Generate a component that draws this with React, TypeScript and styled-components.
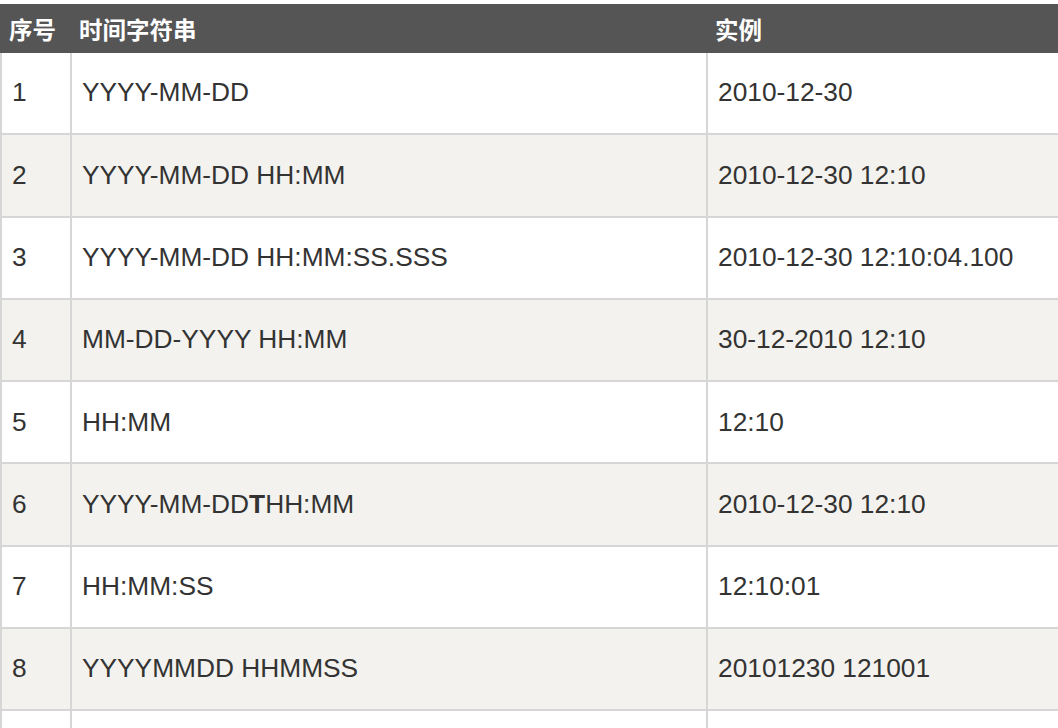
import React from "react";
import styled, { createGlobalStyle } from "styled-components";

const Global = createGlobalStyle`
  html, body {
    margin: 0;
    padding: 0;
    background: #ffffff;
    overflow: hidden;
  }
`;

const Page = styled.div`
  padding-top: 4px;
  width: 1058px;
  height: 728px;
  overflow: hidden;
`;

const Table = styled.table`
  width: 1090px;
  border-collapse: separate;
  border-spacing: 0;
  table-layout: fixed;
  font-family: "Liberation Sans", Arial, "Noto Sans CJK SC", sans-serif;
  color: #333333;
`;

const HeadCell = styled.th<{ $w?: number }>`
  ${(p) => (p.$w ? `width: ${p.$w}px;` : "")}
  background: #555555;
  color: #ffffff;
  height: 49px;
  box-sizing: border-box;
  padding: 2px 0 0 9px;
  text-align: left;
  vertical-align: middle;
  font-family: "Noto Sans CJK SC", "Liberation Sans", sans-serif;
  font-size: 23.5px;
  font-weight: 700;
  line-height: 1;
  border-left: 0;
`;

const Row = styled.tr<{ $alt: boolean }>`
  background: ${(p) => (p.$alt ? "#f3f2ee" : "#ffffff")};
`;

const Cell = styled.td`
  height: 82.3px;
  box-sizing: border-box;
  padding: 0 0 0 10px;
  border-left: 2px solid #d6d6d6;
  border-bottom: 2px solid #d6d6d6;
  vertical-align: middle;
  font-size: 26.3px;
  line-height: 1.2;
  white-space: nowrap;
  overflow: hidden;
`;

const rows: [string, React.ReactNode, string][] = [
  ["1", "YYYY-MM-DD", "2010-12-30"],
  ["2", "YYYY-MM-DD HH:MM", "2010-12-30 12:10"],
  ["3", "YYYY-MM-DD HH:MM:SS.SSS", "2010-12-30 12:10:04.100"],
  ["4", "MM-DD-YYYY HH:MM", "30-12-2010 12:10"],
  ["5", "HH:MM", "12:10"],
  [
    "6",
    <>
      YYYY-MM-DD<b>T</b>HH:MM
    </>,
    "2010-12-30 12:10",
  ],
  ["7", "HH:MM:SS", "12:10:01"],
  ["8", "YYYYMMDD HHMMSS", "20101230 121001"],
  ["", "", ""],
];

export default function App() {
  return (
    <>
      <Global />
      <Page>
        <Table>
          <thead>
            <tr>
              <HeadCell $w={70}>序号</HeadCell>
              <HeadCell $w={636}>时间字符串</HeadCell>
              <HeadCell>实例</HeadCell>
            </tr>
          </thead>
          <tbody>
            {rows.map((r, i) => (
              <Row key={i} $alt={i % 2 === 1}>
                <Cell>{r[0]}</Cell>
                <Cell>{r[1]}</Cell>
                <Cell>{r[2]}</Cell>
              </Row>
            ))}
          </tbody>
        </Table>
      </Page>
    </>
  );
}
